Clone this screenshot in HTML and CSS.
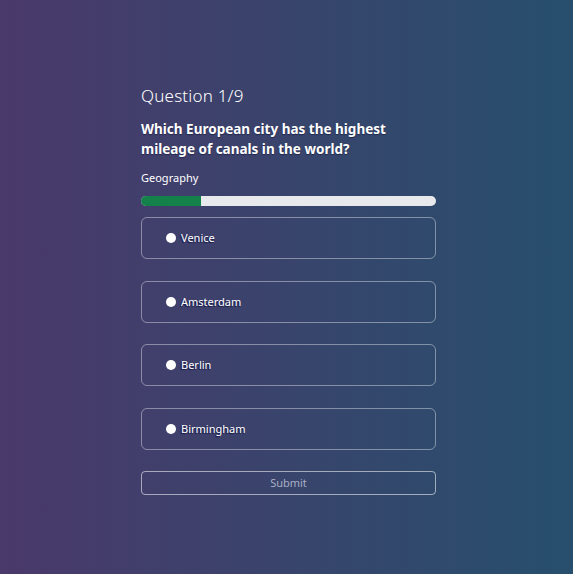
FILE: index.html
```html
<!DOCTYPE html>
<html>
<head>
<meta charset="utf-8">
<link rel="stylesheet" href="styles.css">
</head>
<body>
<div class="page">
  <div class="quiz">
    <h1 class="counter">Question 1/9</h1>
    <h2 class="question">Which European city has the highest mileage of canals in the world?</h2>
    <div class="category">Geography</div>
    <div class="progress"><div class="progress-fill" style="width:20.3%"></div></div>
    <div class="options">
      <label class="option"><span class="radio"></span><span class="label">Venice</span></label>
      <label class="option"><span class="radio"></span><span class="label">Amsterdam</span></label>
      <label class="option"><span class="radio"></span><span class="label">Berlin</span></label>
      <label class="option"><span class="radio"></span><span class="label">Birmingham</span></label>
    </div>
    <button class="submit">Submit</button>
  </div>
</div>
</body>
</html>
```
FILE: styles.css
```css
html, body {
  margin: 0;
  padding: 0;
  height: 100%;
}
body {
  background: linear-gradient(to right, #4a396b, #274f6d);
  font-family: "Noto Sans", "Open Sans", sans-serif;
  color: #fff;
}
.page {
  display: flex;
  justify-content: center;
  padding-left: 4px;
  padding-top: 84px;
}
.quiz {
  width: 295px;
  display: flex;
  flex-direction: column;
}
.counter {
  margin: 0;
  font-weight: 300;
  font-size: 17px;
  line-height: 24px;
  letter-spacing: 0.2px;
}
.question {
  margin: 11px 0 0 0;
  font-weight: 700;
  font-size: 13.5px;
  line-height: 20px;
  width: 260px;
  text-shadow: 0 1px 1px rgba(10, 10, 50, 0.5);
}
.category {
  margin-top: 11px;
  font-size: 11px;
  line-height: 16px;
}
.progress {
  margin-top: 10px;
  height: 10px;
  border-radius: 5px;
  background: #e8e9ec;
  overflow: hidden;
}
.progress-fill {
  height: 100%;
  background: #14814a;
}
.options {
  display: flex;
  flex-direction: column;
  gap: 21.7px;
  margin-top: 11px;
}
.option {
  height: 42px;
  box-sizing: border-box;
  border: 1px solid rgba(255, 255, 255, 0.4);
  border-radius: 6px;
  display: flex;
  align-items: center;
  padding-left: 24px;
  gap: 5px;
  font-size: 11px;
  text-shadow: -1px 1px 1px rgba(10, 10, 60, 0.8);
}
.label {
  margin-top: -1px;
}
.radio {
  width: 10px;
  height: 10px;
  border-radius: 50%;
  background: #fff;
}
.submit {
  margin-top: 20.5px;
  height: 24px;
  border: 1px solid rgba(255, 255, 255, 0.55);
  border-radius: 4px;
  background: transparent;
  color: #a9aec4;
  font-family: "Noto Sans", "Open Sans", sans-serif;
  font-size: 11px;
  padding: 0;
}
```
